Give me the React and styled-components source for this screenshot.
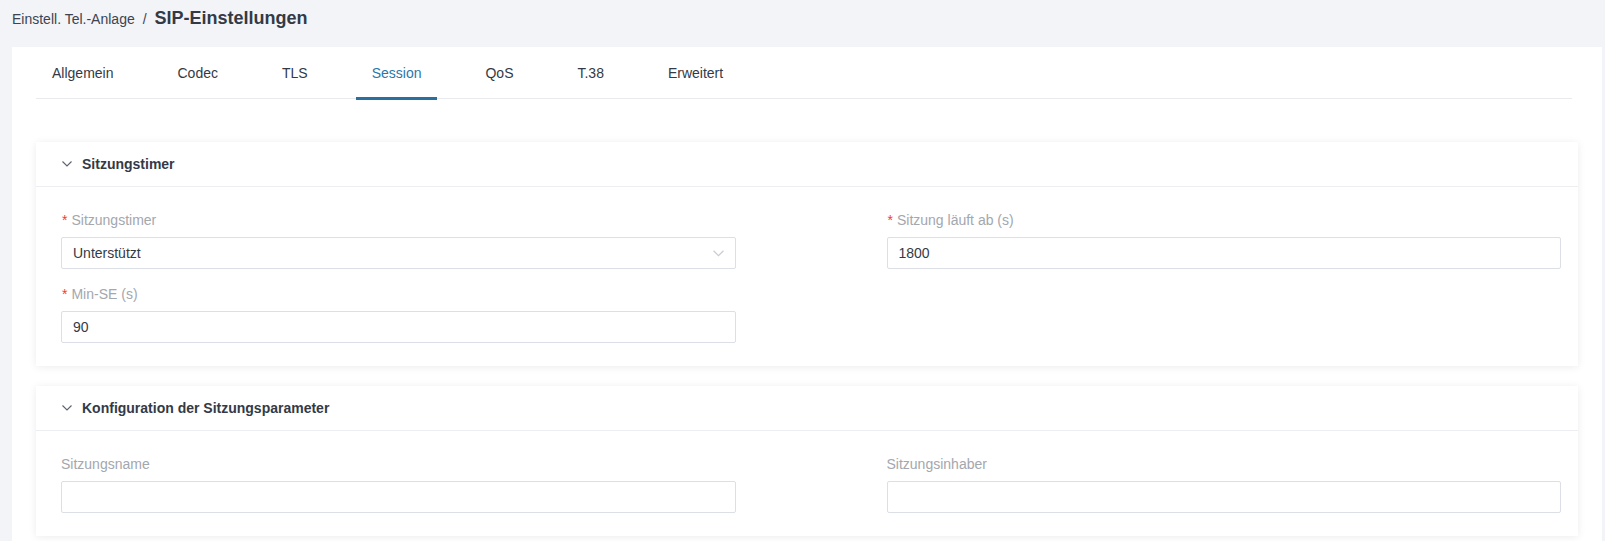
import React, { useState } from 'react';
import styled, { createGlobalStyle } from 'styled-components';

const GlobalStyle = createGlobalStyle`
  html, body {
    margin: 0;
    padding: 0;
    background: #f3f4f7;
    font-family: "Liberation Sans", Arial, sans-serif;
    color: #333a46;
  }
  * { box-sizing: border-box; }
`;

const tabs = ['Allgemein', 'Codec', 'TLS', 'Session', 'QoS', 'T.38', 'Erweitert'];

const Chevron = ({ color = '#5b6170', width = 10, height = 6 }) => (
  <svg width={width} height={height} viewBox="0 0 10 6" fill="none">
    <path d="M0.5 0.5 L5 5 L9.5 0.5" stroke={color} strokeWidth="1.1" />
  </svg>
);

export default function App() {
  const [active, setActive] = useState('Session');

  return (
    <Page>
      <GlobalStyle />
      <Breadcrumb>
        <Crumb>Einstell. Tel.-Anlage</Crumb>
        <Sep>/</Sep>
        <PageTitle>SIP-Einstellungen</PageTitle>
      </Breadcrumb>

      <Card>
        <TabBar>
          {tabs.map(t => (
            <Tab key={t} active={t === active} onClick={() => setActive(t)}>{t}</Tab>
          ))}
        </TabBar>

        <Sections>
          <Section>
            <SectionHeader>
              <Chevron />
              <SectionTitle>Sitzungstimer</SectionTitle>
            </SectionHeader>
            <SectionBody>
              <Field>
                <Label required>Sitzungstimer</Label>
                <SelectBox>
                  <span>Unterstützt</span>
                  <Chevron color="#c8ccd3" width={11} height={7} />
                </SelectBox>
              </Field>
              <Field>
                <Label required>Sitzung läuft ab (s)</Label>
                <Input defaultValue="1800" />
              </Field>
              <Field>
                <Label required>Min-SE (s)</Label>
                <Input defaultValue="90" />
              </Field>
            </SectionBody>
          </Section>

          <Section>
            <SectionHeader>
              <Chevron />
              <SectionTitle>Konfiguration der Sitzungsparameter</SectionTitle>
            </SectionHeader>
            <SectionBody>
              <Field>
                <Label>Sitzungsname</Label>
                <Input defaultValue="" />
              </Field>
              <Field>
                <Label>Sitzungsinhaber</Label>
                <Input defaultValue="" />
              </Field>
            </SectionBody>
          </Section>
        </Sections>
      </Card>
    </Page>
  );
}

//CSS//
const Page = styled.div`
width: 1605px;
height: 541px;
overflow: hidden;
padding: 0 3px 0 12px;
`

const Breadcrumb = styled.div`
height: 47px;
display: flex;
align-items: center;
padding-bottom: 10px;
`

const Crumb = styled.span`
font-size: 14px;
color: #3d4350;
`

const Sep = styled.span`
font-size: 14px;
color: #3d4350;
margin: 0 8px;
`

const PageTitle = styled.span`
font-size: 18px;
font-weight: 700;
color: #333a46;
`

const Card = styled.div`
background: #fff;
min-height: 500px;
padding: 0 30px 0 24px;
`

const TabBar = styled.div`
display: flex;
height: 52px;
border-bottom: 1px solid #e8eaee;
`

const Tab = styled.div`
padding: 15px 16px 0;
margin-right: 32px;
font-size: 14px;
line-height: 22px;
color: ${p => p.active ? '#2a78ab' : '#333a46'};
border-bottom: 3px solid ${p => p.active ? '#2a6f9e' : 'transparent'};
margin-bottom: -2px;
cursor: pointer;
`

const Sections = styled.div`
padding-top: 43px;
margin-right: -6px;
display: flex;
flex-direction: column;
gap: 20px;
`

const Section = styled.div`
background: #fff;
box-shadow: 0 1px 8px rgba(0, 0, 0, 0.08);
`

const SectionHeader = styled.div`
height: 45px;
display: flex;
align-items: center;
gap: 10px;
padding-left: 26px;
border-bottom: 1px solid #eceef1;
`

const SectionTitle = styled.span`
font-size: 14px;
font-weight: 700;
color: #333a46;
`

const SectionBody = styled.div`
display: grid;
grid-template-columns: 1fr 1fr;
column-gap: 151px;
padding: 22px 17px 9px 25px;
`

const Field = styled.div`
margin-bottom: 14px;
`

const Label = styled.div`
height: 22px;
line-height: 22px;
font-size: 14px;
color: #a3a7ae;
margin-bottom: 6px;

&::before {
  content: ${p => p.required ? '"*"' : 'none'};
  color: #f0412a;
  margin: 0 4px 0 1px;
}
`

const Input = styled.input`
display: block;
width: 100%;
height: 32px;
border: 1px solid #dcdfe5;
border-radius: 2px;
padding: 0 11px;
font-family: "Liberation Sans", Arial, sans-serif;
font-size: 14px;
color: #333a46;
outline: none;
`

const SelectBox = styled.div`
height: 32px;
border: 1px solid #dcdfe5;
border-radius: 2px;
padding: 0 11px;
display: flex;
align-items: center;
justify-content: space-between;
font-size: 14px;
color: #333a46;
`
